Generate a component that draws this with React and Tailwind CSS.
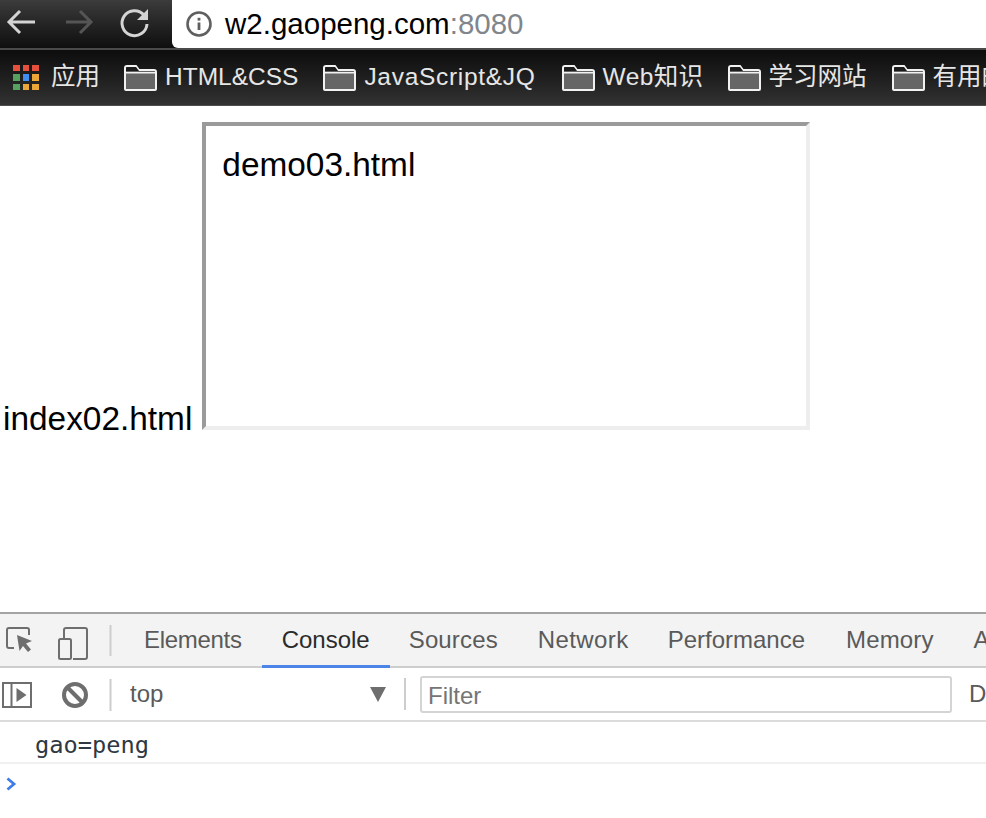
const sans = "font-['Liberation_Sans','Noto_Sans_CJK_SC',sans-serif]";

const bookmarks = [
  { label: 'HTML&CSS', cls: 'mr-[25px]' },
  { label: 'JavaScript&JQ', cls: 'mr-[26px] tracking-[0.7px]' },
  { label: 'Web知识', cls: 'mr-[24px] tracking-[0.4px]' },
  { label: '学习网站', cls: 'mr-[25px]' },
  { label: '有用的网站', cls: '' },
];

const idleTab = 'border-b-2 border-[#cdcdcd] text-[#5a5a5a]';
const tabs = [
  { label: 'Elements', cls: `pl-[20px] pr-[20px] tracking-[-0.3px] ${idleTab}` },
  { label: 'Console', cls: 'border-b-[3px] border-[#4d84e8] pl-[20px] pr-[20px] pt-[1px] text-[#2b2b2b]' },
  { label: 'Sources', cls: `pl-[19px] pr-[20px] tracking-[0.15px] ${idleTab}` },
  { label: 'Network', cls: `pl-[20px] pr-[19px] tracking-[0.4px] ${idleTab}` },
  { label: 'Performance', cls: `pl-[20px] pr-[20px] ${idleTab}` },
  { label: 'Memory', cls: `pl-[21px] pr-[20px] tracking-[0.15px] ${idleTab}` },
  { label: 'Application', cls: `pl-[20px] pr-[20px] ${idleTab}` },
];

const appColors = [
  '#e8503e', '#e8503e', '#e8503e',
  '#56a15f', '#3f8ef0', '#eaa637',
  '#56a15f', '#eaa637', '#eaa637',
];

const FolderIcon = () => (
  <svg width="33" height="26" viewBox="0 0 33 26" className="shrink-0">
    <path d="M1 24V3q0-2 2-2h9l3 4h15q2 0 2 2v17q0 1-1 1H2q-1 0-1-1z" fill="#666" stroke="#f2f2f2" strokeWidth="2" />
    <path d="M1 7.5h31" stroke="#f2f2f2" strokeWidth="2" />
    <path d="M2 6.500h29V6H15l-3-4H3q-1 0-1 1z" fill="#1c1c1c" />
  </svg>
);

const AppsIcon = () => (
  <div className="grid w-[26px] shrink-0 grid-cols-3 gap-[3px]">
    {appColors.map((c, i) => (
      <div key={i} className="h-[6.6px]" style={{ backgroundColor: c }} />
    ))}
  </div>
);

const NavBar = () => (
  <div className="flex h-[48px] bg-gradient-to-b from-[#3c3c3c] to-[#0f0f0f]">
    <div className="flex w-[172px] shrink-0 items-center">
      <svg width="172" height="48" viewBox="0 0 172 48" fill="none" strokeWidth="3">
        <path d="M35 22H10M20 11 9 22l11 11" stroke="#d4d4d4" />
        <path d="M90 22H66M80 11l11 11-11 11" stroke="#555" />
        <path d="M144 15a12.5 12.5 0 1 0 3 9" stroke="#d4d4d4" />
        <path d="M137 20h11v-11z" fill="#d4d4d4" />
      </svg>
    </div>
    <div className={`flex flex-1 items-center rounded-bl-[6px] bg-white pb-[1px] pl-[13px] ${sans}`}>
      <svg width="28" height="28" viewBox="0 0 28 28" className="shrink-0">
        <circle cx="14" cy="14" r="11.5" fill="none" stroke="#5f5f5f" strokeWidth="2.6" />
        <rect x="12.6" y="12.5" width="2.8" height="7.5" fill="#5f5f5f" />
        <rect x="12.6" y="7.8" width="2.8" height="2.8" fill="#5f5f5f" />
      </svg>
      <span className="ml-[12px] text-[29.5px] leading-none text-black">
        w2.gaopeng.com<span className="text-[#80868b]">:8080</span>
      </span>
    </div>
  </div>
);

const BookmarkBar = () => (
  <div className={`flex h-[58px] items-center overflow-hidden whitespace-nowrap border-t-2 border-b border-t-[#4a4a4a] border-b-[#4f4f4f] bg-gradient-to-b from-[#0d0d0d] to-[#323232] pl-[13px] text-[24.5px] leading-none text-[#e6e6e6] ${sans}`}>
    <AppsIcon />
    <span className="ml-[12px] mr-[24px]">应用</span>
    {bookmarks.map((b) => (
      <div key={b.label} className={`flex shrink-0 items-center gap-[8px] ${b.cls}`}>
        <FolderIcon />
        <span>{b.label}</span>
      </div>
    ))}
  </div>
);

const Page = () => (
  <div className={`flex h-[506px] items-start pt-[16px] text-[33.4px] leading-none text-black ${sans}`}>
    <div className="flex items-end">
      <span className="pl-[3px] pr-[10px] leading-[22px]">index02.html</span>
      <div className="h-[308px] w-[608px] border-4 border-t-[#9a9a9a] border-l-[#9a9a9a] border-r-[#eeeeee] border-b-[#eeeeee] bg-white pl-[16px] pt-[22px]">
        demo03.html
      </div>
    </div>
  </div>
);

const TabBar = () => (
  <div className={`flex h-[56px] overflow-hidden whitespace-nowrap border-t-2 border-t-[#a3a3a3] bg-[#f3f3f3] text-[24px] ${sans}`}>
    <div className="flex w-[124px] shrink-0 items-center border-b-2 border-[#cdcdcd]">
      <svg width="124" height="52" viewBox="0 0 124 52" fill="none">
        <path d="M14 34H9q-2 0-2-2V16q0-2 2-2h18q2 0 2 2v5" stroke="#6e6e6e" strokeWidth="2" />
        <path d="M17 21l15 6-6 2.500 5 6-3 2.500-5-6-3.500 5z" fill="#6e6e6e" />
        <path d="M64 25v-9q0-2 2-2h19q2 0 2 2v27q0 2-2 2H73" stroke="#6e6e6e" strokeWidth="2" />
        <rect x="59" y="25" width="12" height="20" rx="1.500" stroke="#6e6e6e" strokeWidth="2" />
        <path d="M110.500 11v31" stroke="#cdcdcd" strokeWidth="2" />
      </svg>
    </div>
    {tabs.map((t) => (
      <div key={t.label} className={`flex shrink-0 items-center ${t.cls}`}>
        {t.label}
      </div>
    ))}
  </div>
);

const FilterBar = () => (
  <div className={`flex h-[54px] items-center border-b-2 border-[#dcdcdc] bg-white text-[24px] text-[#5a5a5a] ${sans}`}>
    <svg width="120" height="52" viewBox="0 0 120 52" fill="none" className="shrink-0">
      <rect x="3" y="15" width="28" height="24" stroke="#6e6e6e" strokeWidth="2" />
      <path d="M11.500 15v24" stroke="#6e6e6e" strokeWidth="2" />
      <path d="M16.500 20l10 7-10 7z" fill="#6e6e6e" />
      <circle cx="75" cy="27" r="11" stroke="#6e6e6e" strokeWidth="4" />
      <path d="M67 19l16 16" stroke="#6e6e6e" strokeWidth="4" />
      <path d="M110.500 11v32" stroke="#cdcdcd" strokeWidth="2" />
    </svg>
    <span className="ml-[10px] w-[240px] shrink-0">top</span>
    <div className="h-0 w-0 shrink-0 border-x-[8px] border-t-[15px] border-x-transparent border-t-[#6e6e6e]" />
    <div className="ml-[18px] h-[32px] w-[2px] shrink-0 bg-[#cdcdcd]" />
    <div className="ml-[14px] flex h-[37px] w-[532px] shrink-0 items-center rounded-[3px] border-2 border-[#d4d4d4] pl-[6px] pt-[3px] text-[#757575]">
      Filter
    </div>
    <span className="ml-[17px]">D</span>
  </div>
);

const ConsoleOutput = () => (
  <div className="flex flex-1 flex-col bg-white">
    <div className="flex h-[42px] items-center border-b-2 border-[#f0f0f0] pl-[35px] pt-[7px] font-['DejaVu_Sans_Mono',monospace] text-[23.7px] text-[#303942]">
      gao=peng
    </div>
    <div className="flex h-[38px] items-center pl-[6px] pt-[2px]">
      <svg width="11" height="14" viewBox="0 0 11 14" fill="none">
        <path d="M1.500 1.500 8 7l-6.500 5.500" stroke="#3f7ce8" strokeWidth="2.800" />
      </svg>
    </div>
  </div>
);

export default function App() {
  return (
    <div className="flex h-[818px] w-[986px] flex-col overflow-hidden bg-white">
      <NavBar />
      <BookmarkBar />
      <Page />
      <TabBar />
      <FilterBar />
      <ConsoleOutput />
    </div>
  );
}
